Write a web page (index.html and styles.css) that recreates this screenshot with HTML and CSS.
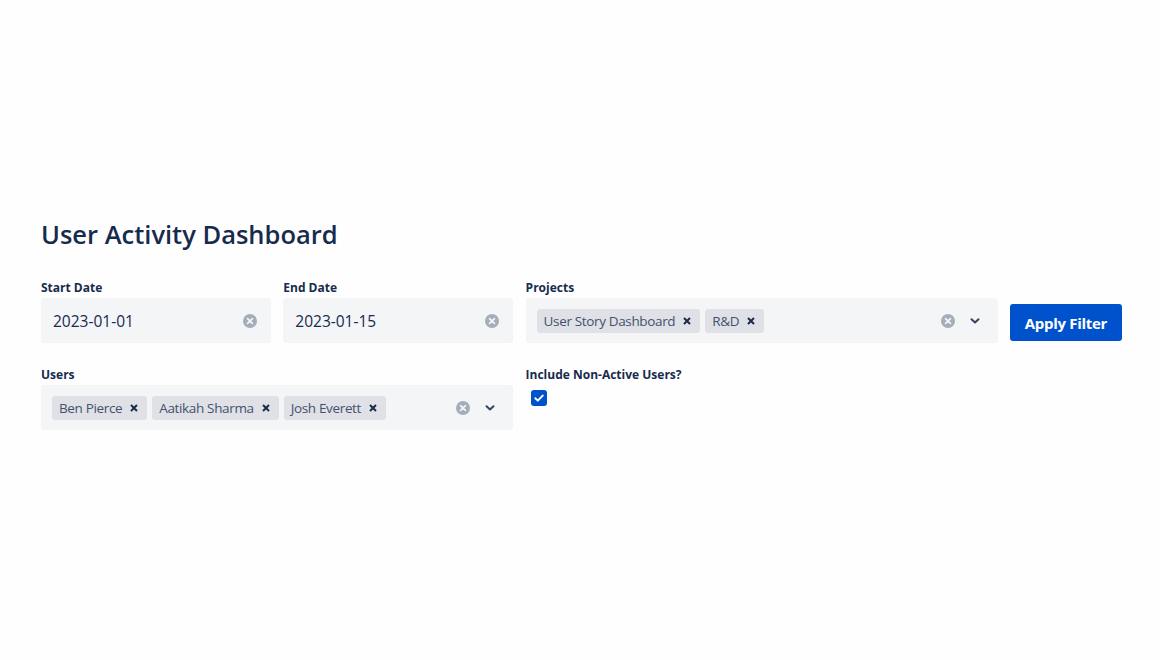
FILE: index.html
```html
<!DOCTYPE html>
<html>
<head>
<meta charset="utf-8">
<link rel="stylesheet" href="styles.css">
</head>
<body>
<main class="page">
  <h1 class="title">User Activity Dashboard</h1>
  <div class="filters">
    <div class="field">
      <label class="label">Start Date</label>
      <div class="input">
        <span class="value">2023-01-01</span>
        <span class="clear"><svg width="14" height="14" viewBox="0 0 14 14"><circle cx="7" cy="7" r="7" fill="#A5ADBA"/><path d="M4.6 4.6l4.8 4.8M9.4 4.6l-4.8 4.8" stroke="#F4F5F7" stroke-width="1.8" stroke-linecap="round"/></svg></span>
      </div>
    </div>
    <div class="field">
      <label class="label">End Date</label>
      <div class="input">
        <span class="value">2023-01-15</span>
        <span class="clear"><svg width="14" height="14" viewBox="0 0 14 14"><circle cx="7" cy="7" r="7" fill="#A5ADBA"/><path d="M4.6 4.6l4.8 4.8M9.4 4.6l-4.8 4.8" stroke="#F4F5F7" stroke-width="1.8" stroke-linecap="round"/></svg></span>
      </div>
    </div>
    <div class="field">
      <label class="label">Projects</label>
      <div class="input select">
        <div class="tags">
          <span class="tag">User Story Dashboard<svg class="tag-x" width="8" height="8" viewBox="0 0 8 8"><path d="M1 1l6 6M7 1L1 7" stroke="#172B4D" stroke-width="2"/></svg></span>
          <span class="tag">R&amp;D<svg class="tag-x" width="8" height="8" viewBox="0 0 8 8"><path d="M1 1l6 6M7 1L1 7" stroke="#172B4D" stroke-width="2"/></svg></span>
        </div>
        <span class="clear"><svg width="14" height="14" viewBox="0 0 14 14"><circle cx="7" cy="7" r="7" fill="#A5ADBA"/><path d="M4.6 4.6l4.8 4.8M9.4 4.6l-4.8 4.8" stroke="#F4F5F7" stroke-width="1.8" stroke-linecap="round"/></svg></span>
        <span class="chev"><svg width="12" height="12" viewBox="0 0 12 12"><path d="M2.5 4.2L6 7.5l3.5-3.3" fill="none" stroke="#344563" stroke-width="2" stroke-linecap="round" stroke-linejoin="round"/></svg></span>
      </div>
    </div>
    <div class="action">
      <button class="btn">Apply Filter</button>
    </div>
    <div class="field wide">
      <label class="label">Users</label>
      <div class="input select">
        <div class="tags">
          <span class="tag">Ben Pierce<svg class="tag-x" width="8" height="8" viewBox="0 0 8 8"><path d="M1 1l6 6M7 1L1 7" stroke="#172B4D" stroke-width="2"/></svg></span>
          <span class="tag">Aatikah Sharma<svg class="tag-x" width="8" height="8" viewBox="0 0 8 8"><path d="M1 1l6 6M7 1L1 7" stroke="#172B4D" stroke-width="2"/></svg></span>
          <span class="tag">Josh Everett<svg class="tag-x" width="8" height="8" viewBox="0 0 8 8"><path d="M1 1l6 6M7 1L1 7" stroke="#172B4D" stroke-width="2"/></svg></span>
        </div>
        <span class="clear"><svg width="14" height="14" viewBox="0 0 14 14"><circle cx="7" cy="7" r="7" fill="#A5ADBA"/><path d="M4.6 4.6l4.8 4.8M9.4 4.6l-4.8 4.8" stroke="#F4F5F7" stroke-width="1.8" stroke-linecap="round"/></svg></span>
        <span class="chev"><svg width="12" height="12" viewBox="0 0 12 12"><path d="M2.5 4.2L6 7.5l3.5-3.3" fill="none" stroke="#344563" stroke-width="2" stroke-linecap="round" stroke-linejoin="round"/></svg></span>
      </div>
    </div>
    <div class="field">
      <label class="label">Include Non-Active Users?</label>
      <div class="check-row">
        <span class="checkbox"><svg width="16" height="16" viewBox="0 0 16 16"><rect x="0" y="0" width="16" height="16" rx="3" fill="#0052CC"/><path d="M4.3 8.2l2.5 2.4 4.9-5" fill="none" stroke="#fff" stroke-width="2" stroke-linecap="round" stroke-linejoin="round"/></svg></span>
      </div>
    </div>
  </div>
</main>
</body>
</html>
```
FILE: styles.css
```css
* { box-sizing: border-box; }
html, body { margin: 0; padding: 0; background: #fefefe; }
body {
  font-family: "Open Sans", "Noto Sans", sans-serif;
  color: #172B4D;
}
.page {
  padding: 214px 38px 0 41px;
}
.title {
  margin: 0 0 26px 0;
  font-size: 25.5px;
  font-weight: 600;
  letter-spacing: 0;
  line-height: 40px;
  color: #172B4D;
}
.filters {
  display: grid;
  grid-template-columns: 230px 230px 472px 112px;
  column-gap: 12.3px;
  row-gap: 24px;
  align-items: start;
}
.field { display: flex; flex-direction: column; }
.field.wide { grid-column: span 2; }
.label {
  font-size: 12px;
  font-weight: 700;
  line-height: 16px;
  margin-bottom: 2px;
  color: #172B4D;
}
.input {
  height: 45px;
  background: #F4F5F7;
  border-radius: 3px;
  display: flex;
  align-items: center;
  padding: 0 14px 0 12px;
}
.value {
  flex: 1;
  font-size: 15.5px;
  color: #172B4D;
}
.clear { display: flex; align-items: center; }
.select { padding: 0 17px 0 11px; }
.tags { flex: 1; display: flex; gap: 5px; }
.tag {
  display: inline-flex;
  align-items: center;
  height: 24px;
  background: #DFE1E6;
  border-radius: 3px;
  padding: 0 9px 0 7px;
  font-size: 13.5px;
  color: #42526E;
  letter-spacing: -0.35px;
}
.tag-x { margin-left: 8px; }
.chev { display: flex; align-items: center; margin-left: 14px; }
.action { align-self: end; padding-bottom: 2px; }
.btn {
  width: 112px;
  height: 37px;
  border: none;
  border-radius: 3px;
  background: #0052CC;
  color: #fff;
  font-family: "Open Sans", "Noto Sans", sans-serif;
  font-size: 15px;
  font-weight: 700;
  letter-spacing: -0.3px;
  padding: 0;
}
.check-row { padding: 5px 0 0 5px; display: flex; }
.checkbox { display: flex; }
```
